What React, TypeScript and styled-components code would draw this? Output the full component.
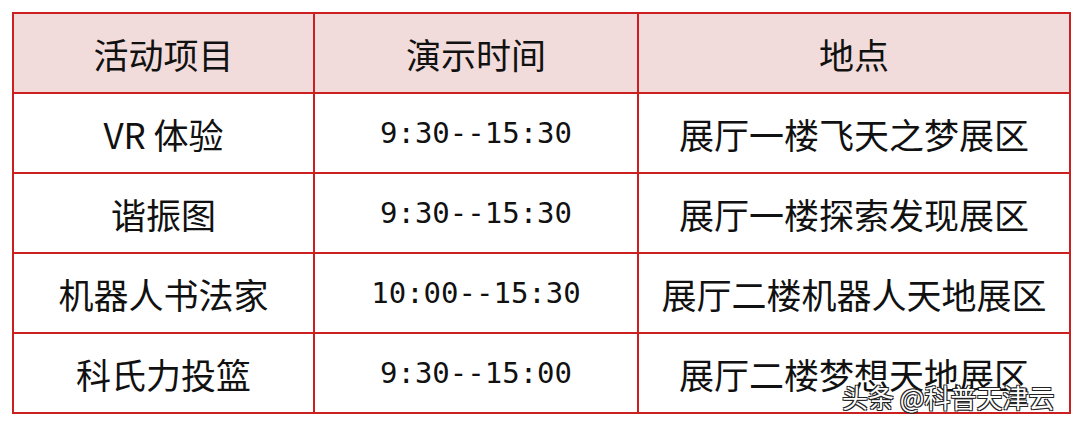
import * as React from 'react';
import styled, { createGlobalStyle } from 'styled-components';

const GlobalStyle = createGlobalStyle`
  html, body {
    margin: 0;
    padding: 0;
    background: #ffffff;
  }
  body {
    font-family: "Noto Sans CJK SC", "Noto Sans", sans-serif;
  }
`;

const Page = styled.div`
  width: 1080px;
  height: 426px;
  padding: 12px;
  box-sizing: border-box;
  position: relative;
  background: #fff;
`;

const Table = styled.table`
  width: 1057px;
  border-collapse: collapse;
  table-layout: fixed;
  border: 2px solid #cc1f1f;
`;

const HeadRow = styled.tr`
  background: #f2dcdb;
`;

const Cell = styled.td<{ $mono?: boolean }>`
  height: 78px;
  padding: 0;
  border: 2px solid #cc1f1f;
  text-align: center;
  vertical-align: middle;
  color: #111;
  font-size: ${(p) => (p.$mono ? '29px' : '35px')};
  font-family: ${(p) =>
    p.$mono ? '"DejaVu Sans Mono", monospace' : '"Noto Sans CJK SC", sans-serif'};
  line-height: 1;
`;

const HeadCell = styled(Cell).attrs({ as: 'th' })`
  font-weight: normal;
`;

const Watermark = styled.div`
  position: absolute;
  left: 842px;
  top: 384px;
  font-family: "Noto Sans CJK SC", sans-serif;
  font-size: 26px;
  line-height: 1;
  color: #ffffff;
  text-shadow:
    1px 1px 0 #222,
    -1px -1px 0 #222,
    1px -1px 0 #222,
    -1px 1px 0 #222;
  white-space: nowrap;
`;

const rows = [
  { name: 'VR 体验', time: '9:30--15:30', place: '展厅一楼飞天之梦展区' },
  { name: '谐振图', time: '9:30--15:30', place: '展厅一楼探索发现展区' },
  { name: '机器人书法家', time: '10:00--15:30', place: '展厅二楼机器人天地展区' },
  { name: '科氏力投篮', time: '9:30--15:00', place: '展厅二楼梦想天地展区' },
];

export default function App() {
  return (
    <Page>
      <GlobalStyle />
      <Table>
        <colgroup>
          <col style={{ width: 301 }} />
          <col style={{ width: 324 }} />
          <col style={{ width: 432 }} />
        </colgroup>
        <thead>
          <HeadRow>
            <HeadCell>活动项目</HeadCell>
            <HeadCell>演示时间</HeadCell>
            <HeadCell>地点</HeadCell>
          </HeadRow>
        </thead>
        <tbody>
          {rows.map((r) => (
            <tr key={r.name}>
              <Cell>{r.name}</Cell>
              <Cell $mono>{r.time}</Cell>
              <Cell>{r.place}</Cell>
            </tr>
          ))}
        </tbody>
      </Table>
      <Watermark>头条 @科普天津云</Watermark>
    </Page>
  );
}
